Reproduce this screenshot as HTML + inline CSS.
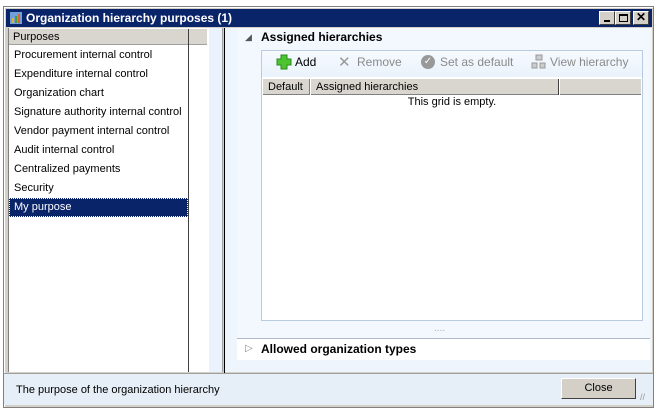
<!DOCTYPE html>
<html><head><style>
*{margin:0;padding:0;box-sizing:border-box}
body{width:659px;height:414px;background:#fff;font-family:Tahoma,"Liberation Sans",sans-serif;font-size:11px;position:relative;overflow:hidden;color:#000}
.a{position:absolute}
.win{left:3px;top:6px;width:651px;height:402px;background:#d4d0c8;border:1px solid #808080;box-shadow:inset 1px 1px 0 #fff}
.title{left:6px;top:9px;width:646px;height:18px;background:#0a246a;color:#fff;font-weight:bold;font-size:12px;line-height:18px;padding-left:20px}
.btn{top:11px;width:16px;height:14px;background:#d4d0c8;border:1px solid;border-color:#fff #404040 #404040 #fff}
.item{left:14px;height:19px;line-height:19px;font-size:11px}
</style></head><body>
<div class="a win"></div>
<div class="a title">Organization hierarchy purposes (1)</div>
<svg class="a" style="left:9px;top:11px" width="14" height="14"><rect x="1" y="1" width="12" height="12" fill="#6fa0d8"/><rect x="3" y="7" width="2" height="5" fill="#e8b030"/><rect x="6" y="5" width="2" height="7" fill="#40a040"/><rect x="9" y="3" width="2" height="9" fill="#e06030"/></svg>
<div class="a btn" style="left:599px"><div class="a" style="left:4px;top:8px;width:6px;height:2px;background:#000"></div></div>
<div class="a btn" style="left:615px"><div class="a" style="left:3px;top:2px;width:9px;height:8px;border:1px solid #000;border-top-width:2px"></div></div>
<div class="a btn" style="left:633px;font-size:12px;font-weight:bold;line-height:11px;text-align:center">✕</div>
<!-- left panel -->
<div class="a" style="left:8px;top:28px;width:214px;height:344px;background:#fff;border-left:1px solid #808080"></div>
<div class="a" style="left:9px;top:29px;width:198px;height:16px;background:#d9d6cf;border-bottom:1px solid #a0a0a0"></div>
<div class="a" style="left:13px;top:29px;line-height:16px">Purposes</div>
<div class="a" style="left:188px;top:29px;width:1px;height:343px;background:#404040"></div>
<div class="a" style="left:207px;top:29px;width:1px;height:16px;background:#fff"></div>
<div class="a item" style="top:46px">Procurement internal control</div>
<div class="a item" style="top:65px">Expenditure internal control</div>
<div class="a item" style="top:84px">Organization chart</div>
<div class="a item" style="top:103px">Signature authority internal control</div>
<div class="a item" style="top:122px">Vendor payment internal control</div>
<div class="a item" style="top:141px">Audit internal control</div>
<div class="a item" style="top:160px">Centralized payments</div>
<div class="a item" style="top:179px">Security</div>
<div class="a" style="left:9px;top:198px;width:179px;height:19px;background:#0a246a;border:1px dotted #fff"></div>
<div class="a item" style="top:198px;color:#fff">My purpose</div>
<!-- divider -->
<div class="a" style="left:209px;top:28px;width:13px;height:344px;background:#eaf3fd"></div>
<div class="a" style="left:222px;top:28px;width:1px;height:344px;background:#a0a0a0"></div>
<div class="a" style="left:224px;top:28px;width:1px;height:345px;background:#000"></div>
<div class="a" style="left:225px;top:28px;width:427px;height:344px;background:#eef5fd"></div>
<div class="a" style="left:237px;top:28px;width:413px;height:310px;background:#f3f8fe"></div>
<div class="a" style="left:245px;top:32px;font-size:9px;color:#555">◢</div>
<div class="a" style="left:261px;top:29px;font-weight:bold;font-size:12px;line-height:16px">Assigned hierarchies</div>
<div class="a" style="left:261px;top:50px;width:382px;height:271px;background:#fff;border:1px solid #b9cbe0"></div>
<div class="a" style="left:262px;top:51px;width:380px;height:26px;background:linear-gradient(#f6fafe,#eaf2fc)"></div>
<svg class="a" style="left:276px;top:54px" width="16" height="16"><path d="M5 1h6v4h4v6h-4v4H5v-4H1V5h4z" fill="#4cc430" stroke="#2a8a1a"/></svg>
<div class="a" style="left:295px;top:55px;font-size:12px">Add</div>
<div class="a" style="left:338px;top:53px;font-size:15px;color:#999">✕</div>
<div class="a" style="left:357px;top:55px;font-size:12px;color:#8a8a8a">Remove</div>
<div class="a" style="left:421px;top:55px;width:14px;height:14px;border-radius:50%;background:#999;color:#fff;font-size:10px;text-align:center;line-height:14px">✓</div>
<div class="a" style="left:440px;top:55px;font-size:12px;color:#8a8a8a">Set as default</div>
<svg class="a" style="left:531px;top:54px" width="16" height="16"><rect x="5" y="1" width="6" height="5" fill="#ccc" stroke="#999"/><rect x="1" y="9" width="5" height="5" fill="#ccc" stroke="#999"/><rect x="9" y="9" width="5" height="5" fill="#ccc" stroke="#999"/></svg>
<div class="a" style="left:550px;top:55px;font-size:12px;color:#8a8a8a">View hierarchy</div>
<div class="a" style="left:263px;top:79px;width:378px;height:16px;background:#d9d6cf;border-bottom:1px solid #808080"></div>
<div class="a" style="left:268px;top:79px;line-height:16px">Default</div>
<div class="a" style="left:309px;top:79px;width:2px;height:16px;border-left:1px solid #808080;border-right:1px solid #fff"></div>
<div class="a" style="left:316px;top:79px;line-height:16px">Assigned hierarchies</div>
<div class="a" style="left:558px;top:79px;width:2px;height:16px;border-left:1px solid #404040;border-right:1px solid #fff"></div>
<div class="a" style="left:263px;top:96px;width:378px;text-align:center">This grid is empty.</div>
<div class="a" style="left:434px;top:323px;color:#aaa;font-size:10px">....</div>
<div class="a" style="left:237px;top:338px;width:413px;height:1px;background:#b0bccc"></div>
<div class="a" style="left:237px;top:339px;width:413px;height:21px;background:#fff"></div>
<div class="a" style="left:245px;top:343px;color:#888;font-size:10px">▷</div>
<div class="a" style="left:261px;top:341px;font-weight:bold;font-size:12px;line-height:16px">Allowed organization types</div>
<!-- footer -->
<div class="a" style="left:4px;top:373px;width:649px;height:1px;background:#a0a0a0"></div>
<div class="a" style="left:4px;top:374px;width:649px;height:31px;background:#e6eef7"></div>
<div class="a" style="left:16px;top:382px;line-height:16px">The purpose of the organization hierarchy</div>
<div class="a" style="left:561px;top:378px;width:75px;height:21px;background:#d4d0c8;border:1px solid;border-color:#fff #404040 #404040 #fff;text-align:center;line-height:18px">Close</div>
<div class="a" style="left:640px;top:392px;color:#999;font-size:9px">//</div>
</body></html>
